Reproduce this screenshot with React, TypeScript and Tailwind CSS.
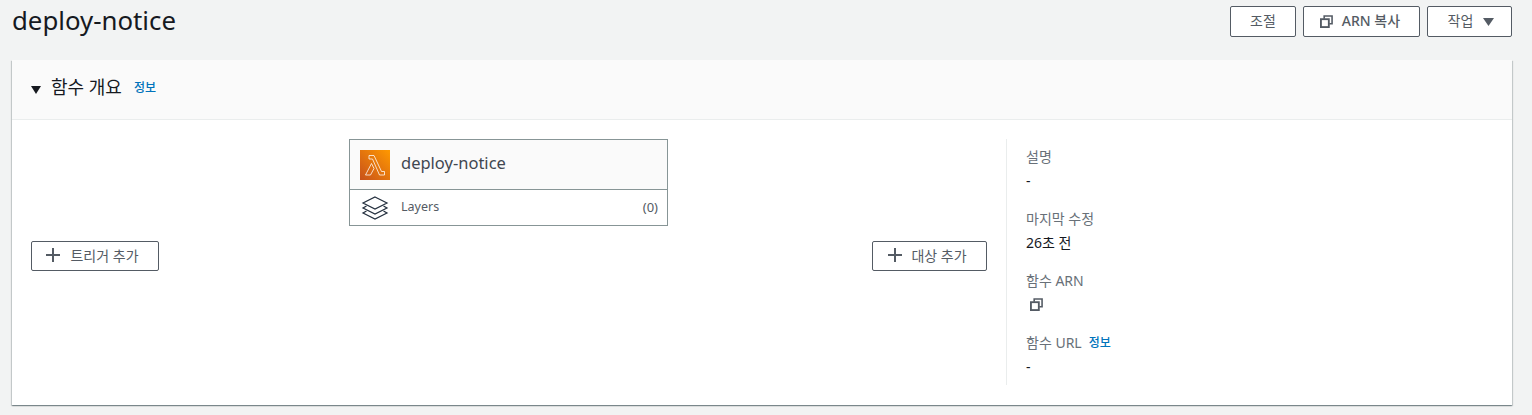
const font = "font-['Noto_Sans','Noto_Sans_CJK_KR',sans-serif]";

function CopyIcon({ className }: { className?: string }) {
  return (
    <svg viewBox="0 0 14 14" fill="none" stroke="currentColor" strokeWidth="2" className={className}>
      <rect x="1" y="4.5" width="8.5" height="8.5" />
      <path d="M4.5 4V1H13V9.5H10" strokeWidth="1.7" />
    </svg>
  );
}

function PlusIcon() {
  return (
    <svg viewBox="0 0 16 16" fill="none" stroke="#545b64" strokeWidth="2" className="w-4 h-4">
      <path d="M1 8H15M8 1V15" />
    </svg>
  );
}

function Caret({ className }: { className?: string }) {
  return (
    <svg viewBox="0 0 12 10" preserveAspectRatio="none" className={className}>
      <path d="M0 0H12L6 10Z" fill="currentColor" />
    </svg>
  );
}

function LambdaIcon() {
  return (
    <svg viewBox="0 0 30 30" className="w-[30px] h-[30px] shrink-0">
      <defs>
        <linearGradient id="lambda-bg" x1="0" y1="1" x2="1" y2="0">
          <stop offset="0" stopColor="#c8511b" />
          <stop offset="1" stopColor="#f90" />
        </linearGradient>
      </defs>
      <rect width="30" height="30" fill="url(#lambda-bg)" />
      <path
        d="M9 5.5H14L21.5 21.5H24.5V25H19.5L12.5 9H9ZM11.5 13.5L14 18.5L10.5 25H5.5Z"
        fill="none"
        stroke="#fff"
        strokeOpacity="0.85"
        strokeWidth="0.9"
      />
    </svg>
  );
}

function LayersIcon() {
  return (
    <svg viewBox="0 0 28 26" fill="none" stroke="#232f3e" strokeWidth="1.2" className="w-[28px] h-[26px] shrink-0">
      <path d="M14 2L26 8L14 14L2 8Z" />
      <path d="M5.5 11L2 13L14 19L26 13L22.5 11" />
      <path d="M5.5 16L2 18L14 24L26 18L22.5 16" />
    </svg>
  );
}

function Button({ children, className }: { children: React.ReactNode; className?: string }) {
  return (
    <button
      className={`flex items-center justify-center bg-white border border-[#545b64] rounded-[2px] text-[14px] text-[#545b64] ${className ?? ''}`}
    >
      {children}
    </button>
  );
}

function Info({ className }: { className?: string }) {
  return <span className={`text-[12px] font-medium text-[#0073bb] ${className ?? ''}`}>정보</span>;
}

function Field({ label, info, children }: { label: string; info?: boolean; children: React.ReactNode }) {
  return (
    <div className="h-[62px]">
      <div className="flex items-center gap-[7px] h-[20px] text-[14px] text-[#687078]">
        {label}
        {info && <Info className="mt-[2px]" />}
      </div>
      <div className="flex items-center h-[20px] mt-[4px] text-[14px] text-[#16191f]">{children}</div>
    </div>
  );
}

export default function App() {
  return (
    <div className={`w-[1532px] h-[415px] overflow-hidden bg-[#f2f3f3] px-[12px] ${font}`}>
      <div className="flex items-start justify-between h-[60px]">
        <h1 className="text-[25.8px] leading-[40px] text-[#16191f]">deploy-notice</h1>
        <div className="flex gap-[7px] mt-[6px] mr-[8px]">
          <Button className="w-[66px] h-[31px] pb-[3px]">조절</Button>
          <Button className="w-[117px] h-[31px] gap-[9px] pb-[3px] pr-[3px] font-medium">
            <CopyIcon className="w-[13px] h-[13px] mt-[3px]" />
            ARN 복사
          </Button>
          <Button className="w-[85px] h-[31px] gap-[10px] pb-[3px] pl-[3px]">
            작업
            <Caret className="w-[11px] h-[8px] mt-[3px]" />
          </Button>
        </div>
      </div>

      <div className="w-[1500px] h-[345px] bg-white shadow-[0_1px_1px_0_rgba(0,28,36,0.3),1px_1px_1px_0_rgba(0,28,36,0.15),-1px_1px_1px_0_rgba(0,28,36,0.15)]">
        <div className="flex items-center h-[60px] pl-[19px] bg-[#fafafa] border-b border-[#eaeded]">
          <Caret className="w-[10px] h-[8px] text-[#16191f]" />
          <h2 className="ml-[10px] mb-[5px] text-[18px] text-[#16191f]">함수 개요</h2>
          <Info className="ml-[12px] mb-[3px]" />
        </div>

        <div className="flex pt-[19px]">
          <div className="w-[975px] ml-[19px]">
            <div className="ml-[318px] w-[319px] h-[87px] border border-[#879596]">
              <div className="flex items-center gap-[11px] h-[50px] pl-[10px] bg-[#fafafa] border-b border-[#879596]">
                <LambdaIcon />
                <span className="mb-[3px] text-[16.5px] text-[#414750]">deploy-notice</span>
              </div>
              <div className="flex items-center h-[35px] pl-[11px] pr-[9px] text-[12.5px] text-[#545b64]">
                <LayersIcon />
                <span className="ml-[12px]">Layers</span>
                <span className="ml-auto text-[13px]">(0)</span>
              </div>
            </div>
            <div className="flex justify-between w-[956px] mt-[15px]">
              <Button className="w-[128px] h-[30px] gap-[9px] pb-[2px] pr-[6px]">
                <PlusIcon />
                트리거 추가
              </Button>
              <Button className="w-[115px] h-[30px] gap-[8px] pb-[2px] pr-[5px]">
                <PlusIcon />
                대상 추가
              </Button>
            </div>
          </div>
          <div className="h-[246px] border-l border-[#eaeded] pl-[19px] pt-[7px]">
            <Field label="설명">-</Field>
            <Field label="마지막 수정">26초 전</Field>
            <Field label="함수 ARN">
              <CopyIcon className="w-[13px] h-[13px] ml-[4px] text-[#545b64]" />
            </Field>
            <Field label="함수 URL" info>
              -
            </Field>
          </div>
        </div>
      </div>
    </div>
  );
}
